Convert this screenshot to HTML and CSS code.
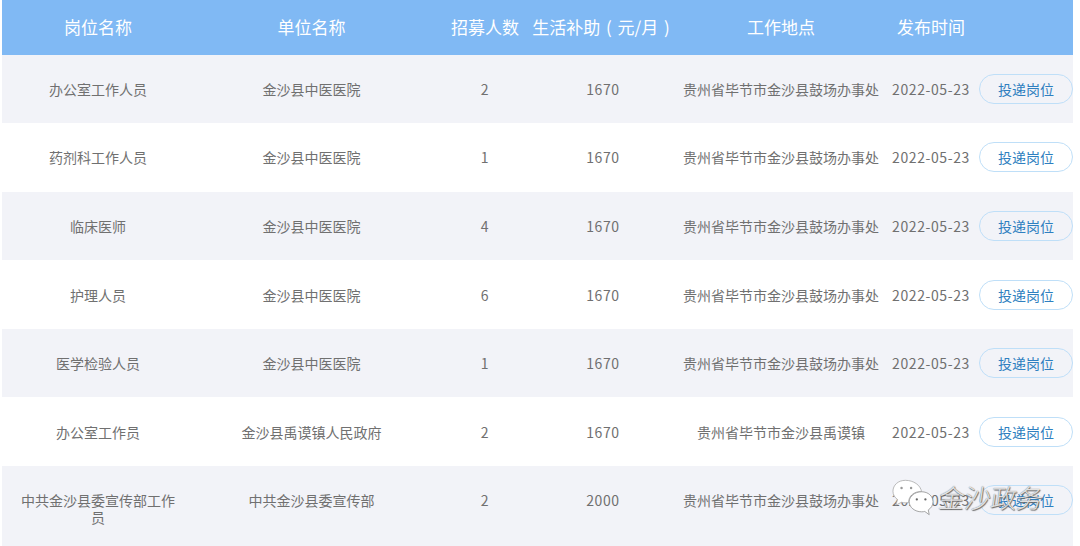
FILE: index.html
```html
<!DOCTYPE html>
<html lang="zh">
<head>
<meta charset="utf-8">
<title>岗位列表</title>
<link rel="stylesheet" href="styles.css">
</head>
<body>
<div class="table">
  <div class="row head"><div>岗位名称</div><div>单位名称</div><div>招募人数</div><div class="sub">生活补助 ( 元/月 )</div><div>工作地点</div><div>发布时间</div><div></div></div>
  <div class="row"><div>办公室工作人员</div><div>金沙县中医医院</div><div class="num">2</div><div class="num">1670</div><div>贵州省毕节市金沙县鼓场办事处</div><div class="num">2022-05-23</div><div class="act"><span class="btn">投递岗位</span></div></div>
  <div class="row"><div>药剂科工作人员</div><div>金沙县中医医院</div><div class="num">1</div><div class="num">1670</div><div>贵州省毕节市金沙县鼓场办事处</div><div class="num">2022-05-23</div><div class="act"><span class="btn">投递岗位</span></div></div>
  <div class="row"><div>临床医师</div><div>金沙县中医医院</div><div class="num">4</div><div class="num">1670</div><div>贵州省毕节市金沙县鼓场办事处</div><div class="num">2022-05-23</div><div class="act"><span class="btn">投递岗位</span></div></div>
  <div class="row"><div>护理人员</div><div>金沙县中医医院</div><div class="num">6</div><div class="num">1670</div><div>贵州省毕节市金沙县鼓场办事处</div><div class="num">2022-05-23</div><div class="act"><span class="btn">投递岗位</span></div></div>
  <div class="row"><div>医学检验人员</div><div>金沙县中医医院</div><div class="num">1</div><div class="num">1670</div><div>贵州省毕节市金沙县鼓场办事处</div><div class="num">2022-05-23</div><div class="act"><span class="btn">投递岗位</span></div></div>
  <div class="row"><div>办公室工作员</div><div>金沙县禹谟镇人民政府</div><div class="num">2</div><div class="num">1670</div><div>贵州省毕节市金沙县禹谟镇</div><div class="num">2022-05-23</div><div class="act"><span class="btn">投递岗位</span></div></div>
  <div class="row"><div class="wrap">中共金沙县委宣传部工作员</div><div>中共金沙县委宣传部</div><div class="num">2</div><div class="num">2000</div><div>贵州省毕节市金沙县鼓场办事处</div><div class="num">2022-05-23</div><div class="act"><span class="btn">投递岗位</span></div></div>
  <div class="tail"></div>
</div>
<div class="mark">
  <svg class="bubbles" width="42" height="37" viewBox="0 0 44 38">
    <path d="M14 1C6.500 1 1 6 1 12.500c0 3.500 1.800 6.500 4.800 8.600L4 27l6-3c1.500.4 3 .6 4.500.6 1 0 2-.1 3-.3C17 18 23 12 31 13 30 6 22.500 1 14 1z" fill="#fff" stroke="#a5a5a5" stroke-width=".8"/>
    <circle cx="10" cy="9" r="1.300" fill="#999"/><circle cx="20" cy="9" r="1.300" fill="#999"/>
    <path d="M31 13c-7 0-13 4.700-13 10.500S24 34 31 34c1.200 0 2.300-.1 3.300-.4L39 37l-1-5c3-1.900 5-4.900 5-8.500C43 17.700 38 13 31 13z" fill="#fff" stroke="#8a8a8a" stroke-width=".8"/>
    <circle cx="26" cy="21" r="1.200" fill="#666"/><circle cx="35" cy="21" r="1.200" fill="#666"/>
  </svg>
  <span class="mark-text">金沙政务</span>
</div>
</body>
</html>
```
FILE: styles.css
```css
html, body { margin: 0; padding: 0; background: #fff; }
body {
  width: 1080px;
  height: 546px;
  overflow: hidden;
  position: relative;
  font-family: "Noto Sans CJK SC", "Noto Sans", sans-serif;
}
.table { margin-left: 2px; width: 1071px; }
.row {
  display: grid;
  grid-template-columns: 192px 235px 112px 124px 232px 68px 108px;
  height: 68.6px;
  align-items: center;
  text-align: center;
  font-size: 14px;
  line-height: 16px;
  color: #707070;
}
.row > div { white-space: nowrap; display: flex; justify-content: center; }
.row:nth-child(even) { background: #f2f3f8; }
.row > .num { letter-spacing: .6px; }
.head {
  height: 54.5px;
  background: #80b9f4;
  color: #fff;
  font-size: 17px;
}
.row > .sub { white-space: pre; word-spacing: 2px; padding-right: 4px; }
.tail { height: 12px; background: #f2f3f8; }
.row > .wrap {
  white-space: normal;
  display: block;
  padding: 17px 18px 0;
  line-height: 17px;
}
.act { justify-content: flex-end !important; }
.btn {
  box-sizing: border-box;
  width: 94px;
  height: 30px;
  border: 1px solid #bfdff8;
  border-radius: 15px;
  line-height: 28px;
  color: #2f7fc0;
}
.mark {
  position: absolute;
  left: 892px;
  top: 479px;
  display: flex;
  align-items: flex-start;
}
.mark-text {
  margin: 0 0 0 5px;
  font-size: 26px;
  font-weight: 300;
  line-height: 36px;
  color: rgba(255,255,255,.82);
  text-shadow: 0 0 1px #555, 1px 1px 1px #666;
  white-space: nowrap;
  transform: skewX(-8deg);
}
```
